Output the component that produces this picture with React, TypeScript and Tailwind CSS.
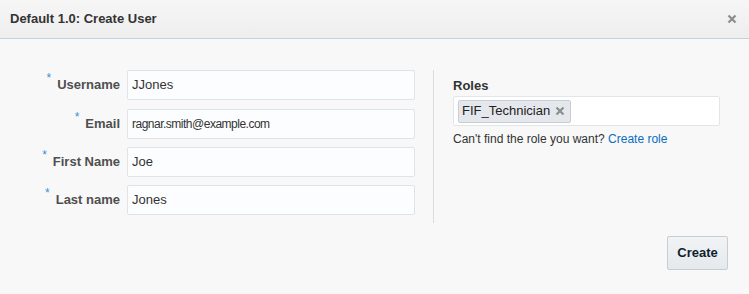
import React from "react";

const font = { fontFamily: '"Liberation Sans", Arial, sans-serif' };

function Field({ label, value, small }: { label: string; value: string; small?: boolean }) {
  return (
    <div className="flex items-center h-[30px]">
      <div className="w-[93px] flex justify-end items-start pr-[7px] text-[13px] font-bold text-[#4f4f4f]">
        <span className="text-[#3d8fd6] text-[12px] font-normal mr-[6px] -mt-[6px]">*</span>
        <span>{label}</span>
      </div>
      <div
        className={`w-[288px] h-[30px] bg-[#fcfdfe] border border-[#dfe4e7] rounded-[2px] flex items-center px-[4px] text-[#333] ${
          small ? "text-[12px] tracking-[-0.5px]" : "text-[13px]"
        }`}
      >
        {value}
      </div>
    </div>
  );
}

export default function App() {
  return (
    <div className="w-[749px] h-[294px] bg-[#f8f8f8] flex flex-col" style={font}>
      <div className="h-[39px] bg-gradient-to-b from-[#f6f6f6] to-[#eeeeee] border-b border-[#c4d0da] flex items-center justify-between pl-[10px] pr-[12px] shrink-0">
        <span className="text-[13px] font-bold text-[#333]">Default 1.0: Create User</span>
        <svg width="10" height="10" viewBox="0 0 10 10">
          <path d="M1.5 1.5 L8.5 8.5 M8.5 1.5 L1.5 8.5" stroke="#8c8c8c" strokeWidth="2.2" strokeLinecap="butt" />
        </svg>
      </div>
      <div className="flex pt-[31px] pl-[34px]">
        <div className="flex flex-col w-[399px]">
          <Field label="Username" value="JJones" />
          <div className="mt-[9px]">
            <Field label="Email" value="ragnar.smith@example.com" small />
          </div>
          <div className="mt-[8px]">
            <Field label="First Name" value="Joe" />
          </div>
          <div className="mt-[8px]">
            <Field label="Last name" value="Jones" />
          </div>
        </div>
        <div className="w-px h-[153px] bg-[#dcdcdc]" />
        <div className="pl-[19px] pt-[8px]">
          <div className="text-[13px] font-semibold text-[#333] leading-[16px]">Roles</div>
          <div className="mt-[2px] w-[267px] h-[30px] bg-white border border-[#e3e6e9] rounded-[2px] flex items-center pl-[4px]">
            <div className="h-[23px] bg-[#e4e8ed] border border-[#c8cdd3] rounded-[2px] flex items-center pl-[3px] pr-[5px] text-[13px] text-[#222]">
              FIF_Technician
              <svg width="10" height="10" viewBox="0 0 10 10" className="ml-[5px]">
                <path d="M1.5 1.5 L8.5 8.5 M8.5 1.5 L1.5 8.5" stroke="#8d8d8d" strokeWidth="2.2" />
              </svg>
            </div>
          </div>
          <div className="mt-[6px] text-[12px] text-[#333] leading-[14px]">
            Can't find the role you want? <span className="text-[#0a6dbf]">Create role</span>
          </div>
        </div>
      </div>
      <div className="flex justify-end pr-[21px] mt-[13px]">
        <button className="w-[61px] h-[34px] bg-gradient-to-b from-[#f1f3f5] to-[#e6e9ec] border border-[#c4ced7] rounded-[2px] text-[13px] font-bold text-[#0f1e33]">
          Create
        </button>
      </div>
    </div>
  );
}
